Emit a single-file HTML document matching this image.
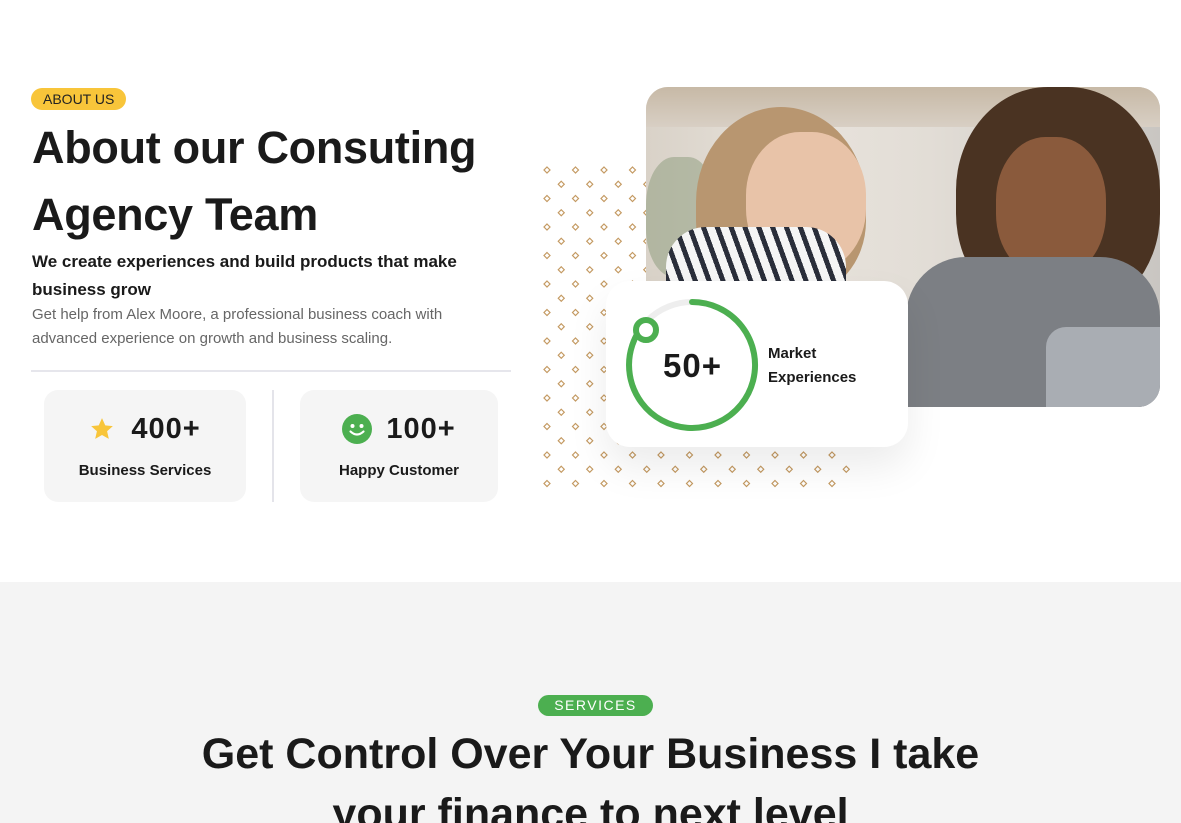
<!DOCTYPE html>
<html><head><meta charset="utf-8"><style>
*{margin:0;padding:0;box-sizing:border-box}
html,body{width:1181px;height:823px;overflow:hidden}
body{background:#fff;font-family:"Liberation Sans",sans-serif;color:#1a1a1a;position:relative}
.abs{position:absolute}
.tag{left:31px;top:88px;height:22px;padding:0 12px;background:#f8c53a;border-radius:11px;font-size:14px;line-height:22px;color:#222}
h1{position:absolute;left:32px;top:114px;font-size:45px;line-height:67px;font-weight:700;letter-spacing:-0.3px;color:#1a1a1a}
.sub{left:32px;top:248px;font-size:17px;font-weight:700;line-height:28px;width:470px}
.desc{left:32px;top:303px;font-size:15px;line-height:24px;color:#666;width:470px}
.hr{left:31px;top:370px;width:480px;height:2px;background:#e6e6ec}
.card{top:390px;height:112px;background:#f5f5f5;border-radius:14px;text-align:center}
.num{font-size:29px;font-weight:700;line-height:34px;letter-spacing:1px}
.lbl{font-size:15px;font-weight:700;margin-top:16px}
.vr{left:272px;top:390px;width:2px;height:112px;background:#e4e4ea}
.photo{left:646px;top:87px;width:514px;height:320px;border-radius:22px;overflow:hidden;background:linear-gradient(90deg,#d9d2c8 0%,#e8e3dc 30%,#e2ddd6 55%,#c9c6c2 100%)}
.stat{left:606px;top:281px;width:302px;height:166px;background:#fff;border-radius:24px;box-shadow:0 20px 40px rgba(0,0,0,.08)}
.sec2{left:0;top:582px;width:1181px;height:241px;background:#f4f4f4;overflow:hidden}
.tag2{left:538px;top:695px;width:115px;height:21px;background:#4caf50;border-radius:11px;color:#fff;font-size:14px;letter-spacing:1.5px;line-height:21px;text-align:center}
h2{position:absolute;left:0;width:1181px;top:724px;text-align:center;font-size:43px;line-height:60px;font-weight:700}
</style></head><body>
<div class="abs tag">ABOUT US</div>
<h1>About our Consuting<br>Agency Team</h1>
<div class="abs sub">We create experiences and build products that make business grow</div>
<div class="abs desc">Get help from Alex Moore, a professional business coach with advanced experience on growth and business scaling.</div>
<div class="abs hr"></div>
<div class="abs card" style="left:44px;width:202px">
 <div style="margin-top:22px;display:flex;justify-content:center;align-items:center;gap:16px">
  <svg width="26" height="26" viewBox="0 0 24 24"><path d="M12 2l3 6.6 7 .7-5.3 4.8 1.6 7L12 17.5 5.7 21.1l1.6-7L2 9.3l7-.7z" fill="#f8c53a"/></svg>
  <span class="num">400+</span></div>
 <div class="lbl">Business Services</div></div>
<div class="abs vr"></div>
<div class="abs card" style="left:300px;width:198px">
 <div style="margin-top:22px;display:flex;justify-content:center;align-items:center;gap:14px">
  <svg width="30" height="30" viewBox="0 0 30 30"><circle cx="15" cy="15" r="15" fill="#4caf50"/><circle cx="10.5" cy="12" r="2" fill="#fff"/><circle cx="19.5" cy="12" r="2" fill="#fff"/><path d="M8.5 17.5q6.5 6 13 0" stroke="#fff" stroke-width="2.2" fill="none" stroke-linecap="round"/></svg>
  <span class="num">100+</span></div>
 <div class="lbl">Happy Customer</div></div>

<svg class="abs" style="left:540px;top:163px" width="310" height="330">
 <defs><pattern id="d" width="28.5" height="28.5" patternUnits="userSpaceOnUse">
  <path d="M7 4l3 3-3 3-3-3z" fill="none" stroke="#c49a62" stroke-width="1.2"/>
  <path d="M21.25 18.25l3 3-3 3-3-3z" fill="none" stroke="#c49a62" stroke-width="1.2"/></pattern></defs>
 <rect width="310" height="330" fill="url(#d)"/></svg>

<div class="abs photo">
 <div class="abs" style="left:0;top:0;width:514px;height:40px;background:linear-gradient(#c7b9a6,#d8cfc4)"></div>
 <div class="abs" style="left:0;top:70px;width:70px;height:120px;background:#8a9a7a;opacity:.5;border-radius:40%"></div>
 <div class="abs" style="left:50px;top:20px;width:170px;height:190px;background:#b89670;border-radius:50% 50% 40% 40%"></div>
 <div class="abs" style="left:100px;top:45px;width:120px;height:140px;background:#e8c3a8;border-radius:45%"></div>
 <div class="abs" style="left:20px;top:140px;width:180px;height:80px;background:repeating-linear-gradient(70deg,#f5f5f5 0 8px,#2a2e3a 8px 13px);border-radius:40px 40px 0 0"></div>
 <div class="abs" style="left:310px;top:0;width:204px;height:230px;background:#4a3322;border-radius:45%"></div>
 <div class="abs" style="left:350px;top:50px;width:110px;height:140px;background:#8a5a3c;border-radius:45%"></div>
 <div class="abs" style="left:260px;top:170px;width:254px;height:150px;background:#7c7f84;border-radius:60px 60px 0 0"></div>
 <div class="abs" style="left:400px;top:240px;width:114px;height:80px;background:#a9adb3;border-radius:20px 0 0 0"></div>
</div>

<div class="abs stat">
 <svg class="abs" style="left:18px;top:14px" width="140" height="140" viewBox="0 0 140 140">
  <circle cx="68" cy="70" r="63" fill="none" stroke="#eeeeee" stroke-width="6"/>
  <path d="M68 7A63 63 0 1 1 22 27" fill="none" stroke="#4caf50" stroke-width="6" stroke-linecap="round"/>
  <circle cx="22" cy="35" r="10" fill="#fff" stroke="#4caf50" stroke-width="6"/>
 </svg>
 <div class="abs" style="left:57px;top:66px;font-size:33px;font-weight:700;letter-spacing:1px">50+</div>
 <div class="abs" style="left:162px;top:61px;font-size:15px;font-weight:700;line-height:24px">Market<br>Experiences</div>
</div>

<div class="abs sec2"></div>
<div class="abs tag2">SERVICES</div>
<h2>Get Control Over Your Business I take<br>your finance to next level</h2>
</body></html>
